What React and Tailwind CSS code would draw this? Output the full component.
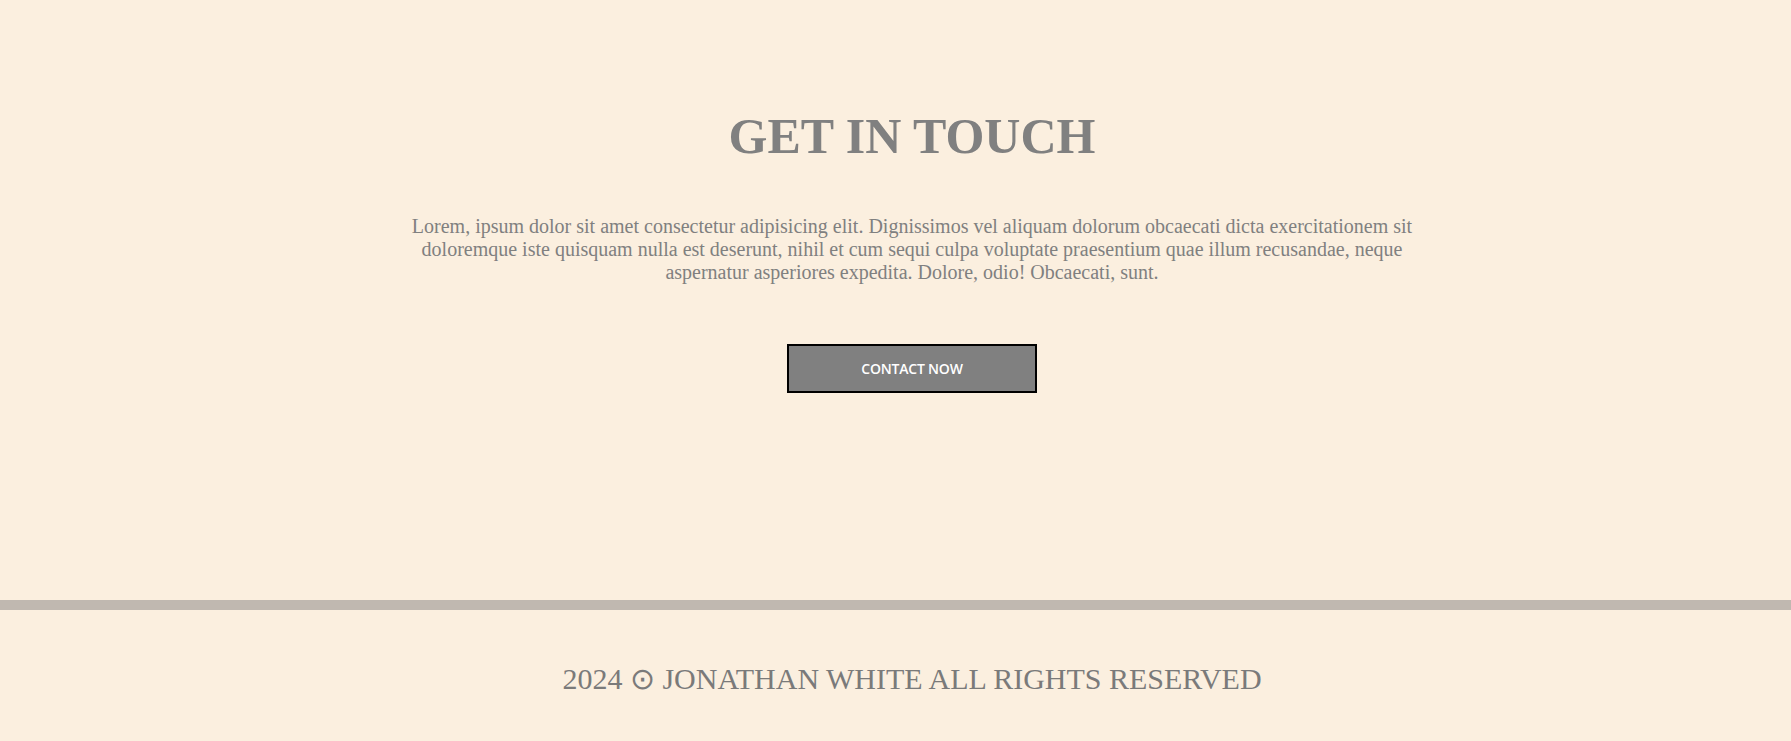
import React from 'react';

const serif = { fontFamily: '"Liberation Serif", "Times New Roman", serif' };

const ContactSection = () => {
    return (
        <section className="flex flex-col items-center pl-[33px] pt-[108px] pb-[207px] text-center">
            <h2 className="text-[50px] leading-[57px] font-bold text-[#808080]">GET IN TOUCH</h2>
            <p className="mt-[50px] w-[1010px] text-[20px] leading-[23px] text-[#808080]">
                Lorem, ipsum dolor sit amet consectetur adipisicing elit. Dignissimos vel aliquam dolorum obcaecati dicta exercitationem sit doloremque iste quisquam nulla est deserunt, nihil et cum sequi culpa voluptate praesentium quae illum recusandae, neque aspernatur asperiores expedita. Dolore, odio! Obcaecati, sunt.
            </p>
            <button className="mt-[60px] w-[250px] h-[49px] border-2 border-black bg-[#808080] text-white text-[14px] font-semibold tracking-[-0.2px] font-['Open_Sans',Arial,sans-serif]">
                CONTACT NOW
            </button>
        </section>
    );
};

const Footer = () => {
    return (
        <footer className="border-t-[10px] border-[#c0b8b0] pl-[33px] pt-[51px] h-[140px] text-center">
            <p className="text-[30px] leading-[35px] text-[#7a7a7a]">2024 ⊙ JONATHAN WHITE ALL RIGHTS RESERVED</p>
        </footer>
    );
};

export default function App() {
    return (
        <div className="min-h-screen bg-[#fbefdf]" style={serif}>
            <ContactSection />
            <Footer />
        </div>
    );
}
